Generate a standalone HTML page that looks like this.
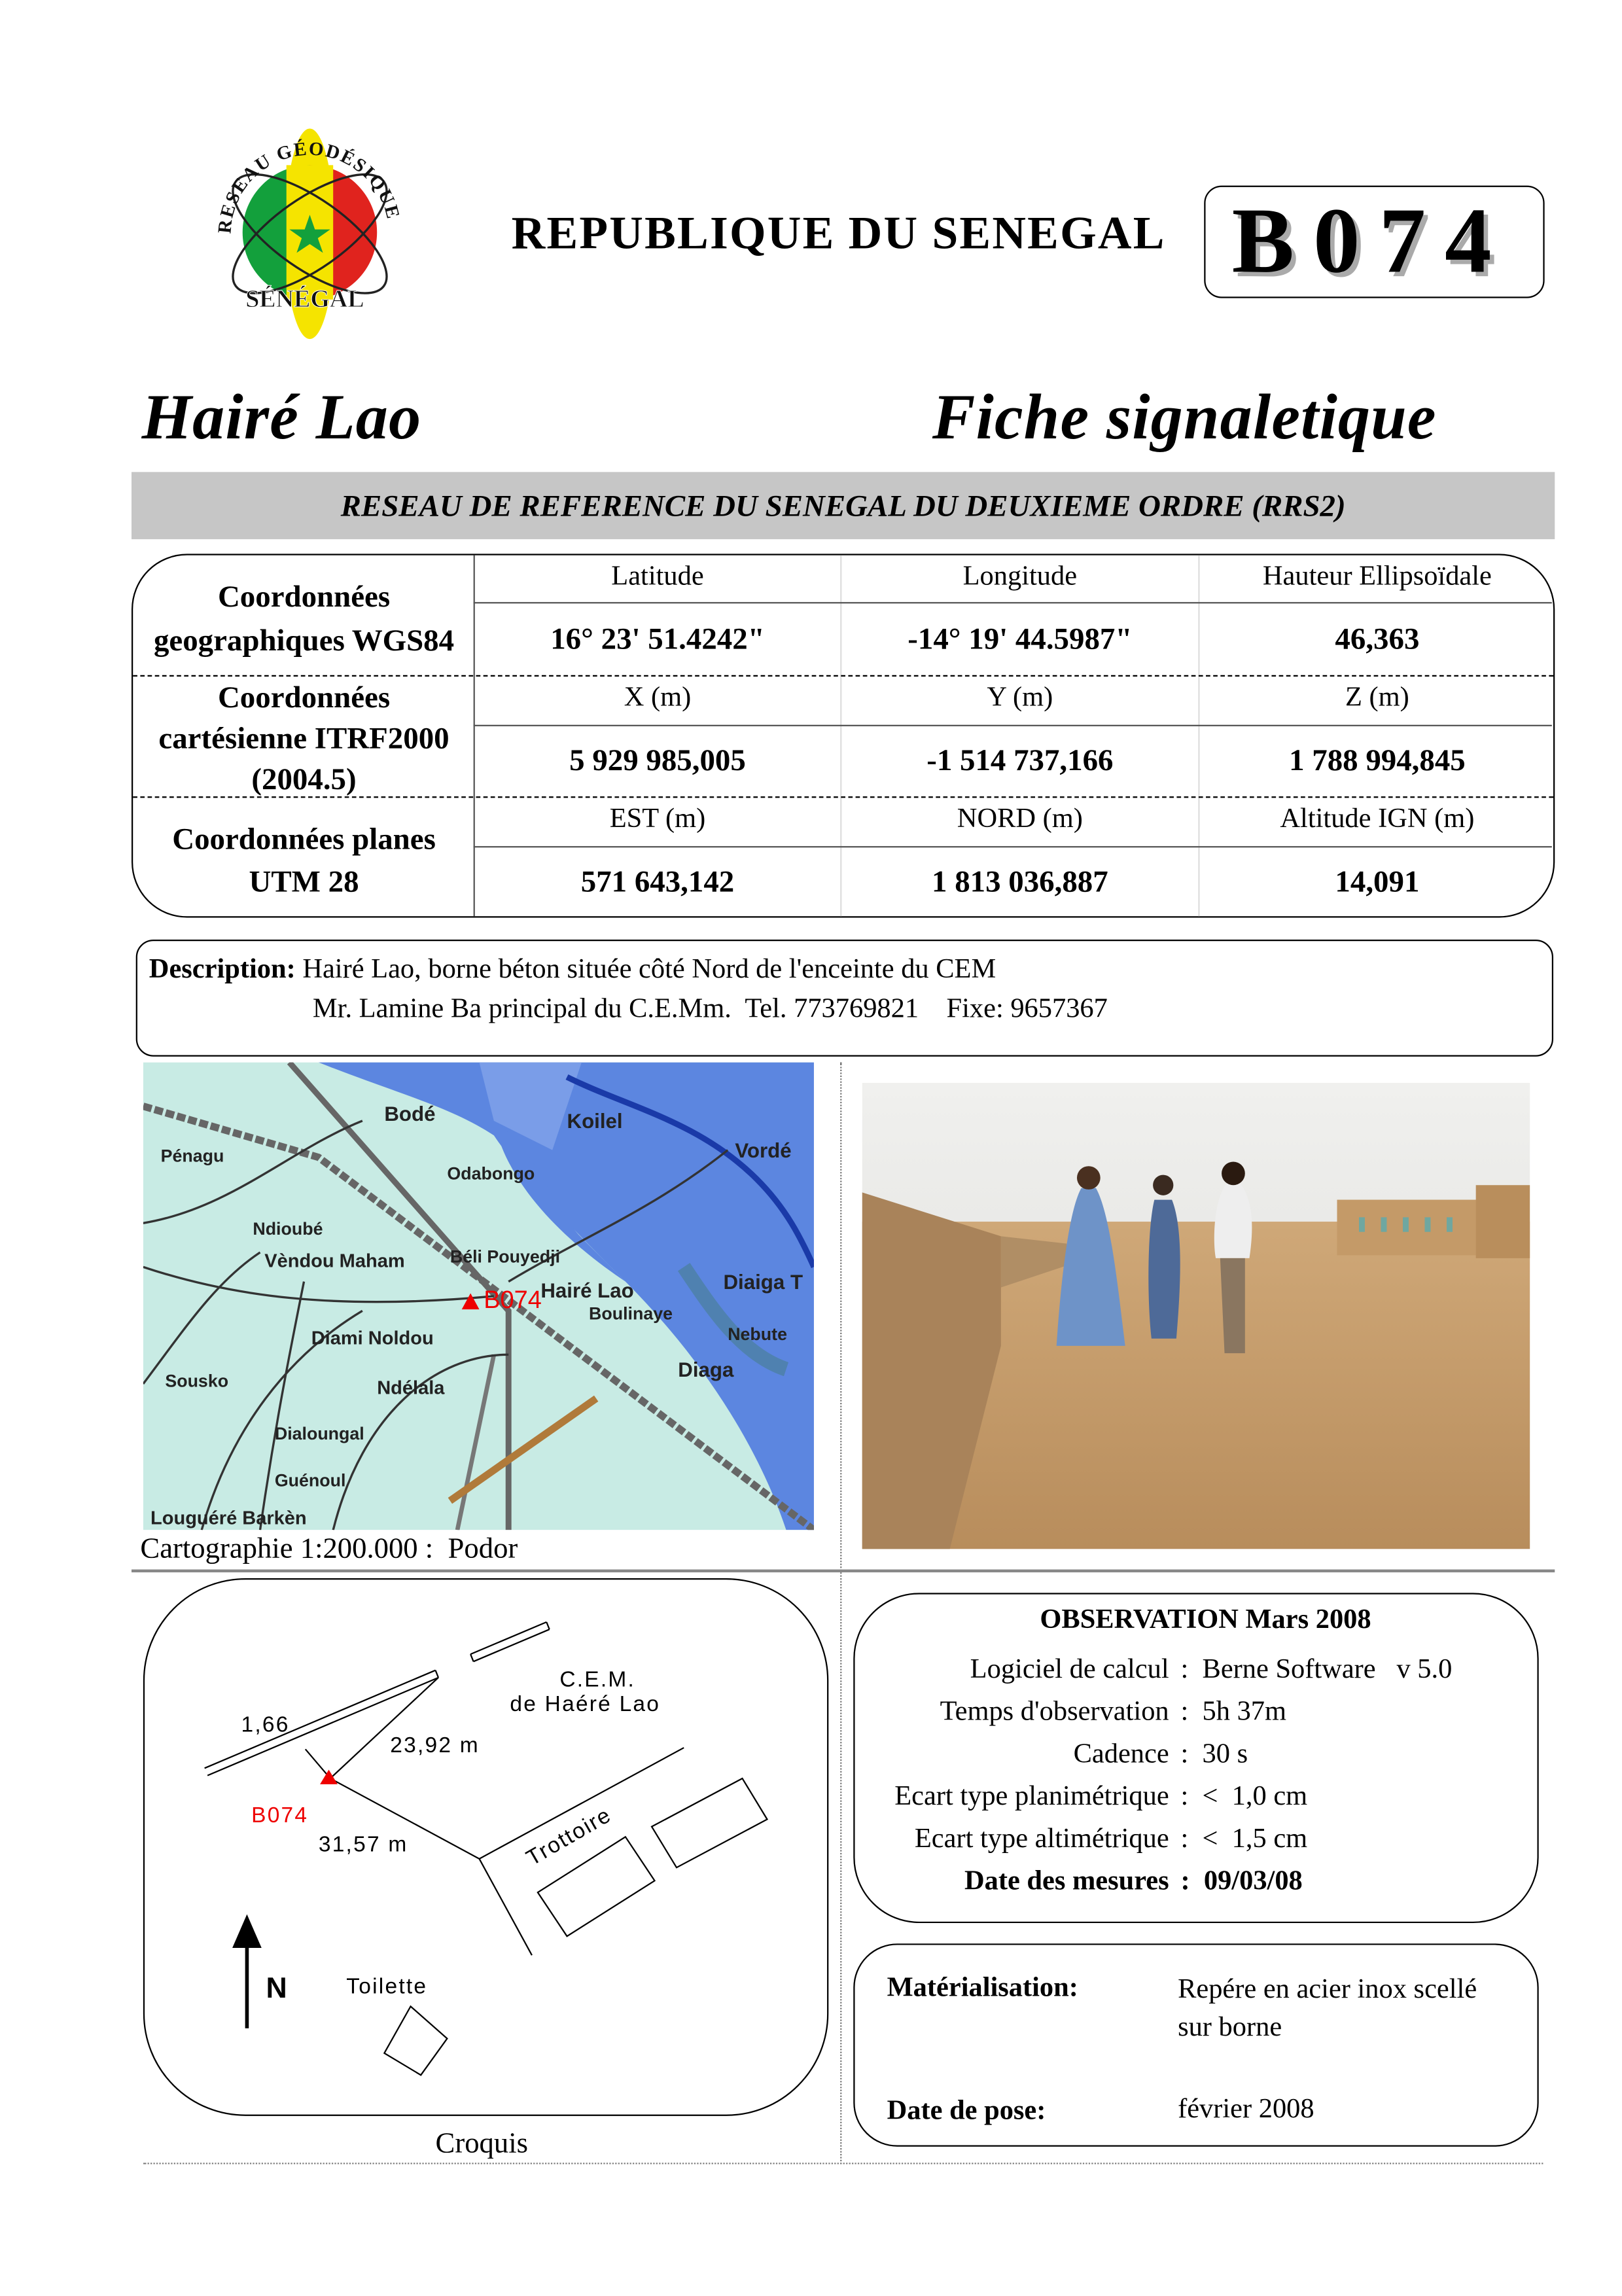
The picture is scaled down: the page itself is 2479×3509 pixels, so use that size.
<!DOCTYPE html>
<html><head><meta charset="utf-8">
<style>
html,body{margin:0;padding:0;background:#fff;}
body{width:2479px;height:3508px;overflow:hidden;position:relative;}
#p{position:absolute;left:0;top:0;width:1110px;height:1571px;transform:scale(2.23333);transform-origin:0 0;font-family:"Liberation Serif",serif;color:#000;}
.a{position:absolute;}
.c{text-align:center;}
</style></head><body><div id="p">

<!-- logo -->
<svg class="a" style="left:140px;top:86px" width="145" height="150" viewBox="0 0 145 150">
<defs><path id="arcT" d="M18,74 A54,54 0 0 1 126,74"/><path id="arcB" d="M30,112 Q72,135 114,112"/></defs>
<ellipse cx="72" cy="74" rx="17" ry="72" fill="#f5e400"/>
<path d="M72,27 A46,46 0 0 0 72,119 Z" fill="#13a03c"/>
<path d="M72,27 A46,46 0 0 1 72,119 Z" fill="#e0231e"/>
<rect x="56" y="27" width="32" height="92" fill="#f5e400"/>
<polygon points="72,61 75.5,71 86,71 77.5,77 81,87 72,81 63,87 66.5,77 58,71 68.5,71" fill="#13a03c"/>
<ellipse cx="72" cy="74" rx="62" ry="24" fill="none" stroke="#222" stroke-width="1.5" transform="rotate(35 72 74)"/>
<ellipse cx="72" cy="74" rx="62" ry="24" fill="none" stroke="#222" stroke-width="1.5" transform="rotate(-35 72 74)"/>
<text font-size="13" font-weight="bold" fill="#111" letter-spacing="1"><textPath href="#arcT">RESEAU GÉODÉSIQUE</textPath></text>
<text x="28" y="124" font-size="17" font-weight="bold" fill="#111" stroke="#fff" stroke-width=".4">SÉNÉGAL</text>
</svg>

<div class="a" style="left:350px;top:141px;font-size:32px;font-weight:bold;white-space:nowrap;letter-spacing:1px">REPUBLIQUE DU SENEGAL</div>
<div class="a" style="left:824px;top:127px;width:233px;height:77px;border:1.5px solid #000;border-radius:12px;box-sizing:border-box"></div>
<div class="a" style="left:843px;top:128px;font-size:64px;font-weight:bold;letter-spacing:13px;text-shadow:3px 3px 0 #aaa;white-space:nowrap">B074</div>

<div class="a" style="left:97px;top:260px;font-size:44px;font-weight:bold;font-style:italic;white-space:nowrap;letter-spacing:.5px">Hairé Lao</div>
<div class="a" style="left:638px;top:260px;font-size:44px;font-weight:bold;font-style:italic;white-space:nowrap;letter-spacing:.5px">Fiche signaletique</div>

<div class="a c" style="left:90px;top:323px;width:974px;height:46px;background:#c6c6c6;font-size:21px;font-weight:bold;font-style:italic;line-height:46px">RESEAU DE REFERENCE DU SENEGAL DU DEUXIEME ORDRE (RRS2)</div>

<!-- coordinate table -->
<div class="a" style="left:90px;top:379px;width:974px;height:249px;border:1.5px solid #000;border-radius:38px;box-sizing:border-box"></div>
<div class="a" style="left:324px;top:380px;width:1px;height:247px;background:#555"></div>
<div class="a" style="left:575px;top:380px;width:1px;height:247px;background:#ddd"></div>
<div class="a" style="left:820px;top:380px;width:1px;height:247px;background:#ddd"></div>
<div class="a" style="left:324px;top:412px;width:738px;height:1px;background:#555"></div>
<div class="a" style="left:324px;top:496px;width:738px;height:1px;background:#555"></div>
<div class="a" style="left:324px;top:579px;width:738px;height:1px;background:#555"></div>
<div class="a" style="left:91px;top:462px;width:972px;border-top:1.5px dashed #000"></div>
<div class="a" style="left:91px;top:545px;width:972px;border-top:1.5px dashed #000"></div>

<div class="a c" style="left:92px;top:393px;width:232px;font-size:21px;font-weight:bold;line-height:30px">Coordonnées<br>geographiques WGS84</div>
<div class="a c" style="left:92px;top:463px;width:232px;font-size:21px;font-weight:bold;line-height:28px">Coordonnées<br>cartésienne ITRF2000<br>(2004.5)</div>
<div class="a c" style="left:92px;top:560px;width:232px;font-size:21px;font-weight:bold;line-height:29px">Coordonnées planes<br>UTM 28</div>

<div class="a c" style="left:325px;top:384px;width:250px;font-size:19px">Latitude</div>
<div class="a c" style="left:576px;top:384px;width:244px;font-size:19px">Longitude</div>
<div class="a c" style="left:821px;top:384px;width:243px;font-size:19px">Hauteur Ellipsoïdale</div>
<div class="a c" style="left:325px;top:425px;width:250px;font-size:21px;font-weight:bold">16° 23' 51.4242"</div>
<div class="a c" style="left:576px;top:425px;width:244px;font-size:21px;font-weight:bold">-14° 19' 44.5987"</div>
<div class="a c" style="left:821px;top:425px;width:243px;font-size:21px;font-weight:bold">46,363</div>

<div class="a c" style="left:325px;top:467px;width:250px;font-size:19px">X (m)</div>
<div class="a c" style="left:576px;top:467px;width:244px;font-size:19px">Y (m)</div>
<div class="a c" style="left:821px;top:467px;width:243px;font-size:19px">Z (m)</div>
<div class="a c" style="left:325px;top:508px;width:250px;font-size:21px;font-weight:bold">5 929 985,005</div>
<div class="a c" style="left:576px;top:508px;width:244px;font-size:21px;font-weight:bold">-1 514 737,166</div>
<div class="a c" style="left:821px;top:508px;width:243px;font-size:21px;font-weight:bold">1 788 994,845</div>

<div class="a c" style="left:325px;top:550px;width:250px;font-size:19px">EST (m)</div>
<div class="a c" style="left:576px;top:550px;width:244px;font-size:19px">NORD (m)</div>
<div class="a c" style="left:821px;top:550px;width:243px;font-size:19px">Altitude IGN (m)</div>
<div class="a c" style="left:325px;top:591px;width:250px;font-size:21px;font-weight:bold">571 643,142</div>
<div class="a c" style="left:576px;top:591px;width:244px;font-size:21px;font-weight:bold">1 813 036,887</div>
<div class="a c" style="left:821px;top:591px;width:243px;font-size:21px;font-weight:bold">14,091</div>

<!-- description -->
<div class="a" style="left:93px;top:643px;width:970px;height:80px;border:1.5px solid #000;border-radius:12px;box-sizing:border-box"></div>
<div class="a" style="left:102px;top:650px;font-size:19px;line-height:27px;white-space:nowrap"><b>Description:</b> Hairé Lao, borne béton située côté Nord de l'enceinte du CEM<br><span style="padding-left:112px">Mr. Lamine Ba principal du C.E.Mm.&nbsp; Tel. 773769821 &nbsp;&nbsp; Fixe: 9657367</span></div>

<!-- map -->
<svg class="a" style="left:98px;top:727px" width="459" height="320" viewBox="0 0 459 320">
<rect width="459" height="320" fill="#c8ebe4"/>
<path d="M120,0 L459,0 L459,320 L440,320 C420,260 380,200 330,150 C300,120 260,80 240,50 C210,30 170,20 120,0Z" fill="#5c86e0"/>
<path d="M230,0 L300,0 L280,60 L240,40Z" fill="#7a9de8"/>
<path d="M240,40 C270,60 280,100 300,120 L330,150 C300,130 250,90 240,40Z" fill="#5c86e0"/>
<path d="M370,140 C390,170 410,200 440,210" stroke="#3d7a6a" stroke-width="10" fill="none" opacity=".4"/>
<path d="M290,10 C330,30 380,40 420,80 C440,100 450,120 459,140" stroke="#1a3aa8" stroke-width="4" fill="none"/>
<path d="M0,30 L120,65 L459,320" stroke="#666" stroke-width="5" fill="none" stroke-dasharray="6 2"/>
<path d="M100,0 L250,170 L250,320" stroke="#666" stroke-width="4" fill="none"/>
<path d="M215,320 L240,200" stroke="#777" stroke-width="3" fill="none"/>
<path d="M0,110 C60,100 100,60 150,40 M0,140 C60,160 130,170 240,160 M40,320 C60,250 100,200 150,170 M80,320 C90,250 100,200 110,150 M130,320 C150,240 200,200 250,200 M250,150 C300,120 350,100 400,60 M0,220 C30,180 50,150 80,130" stroke="#333" stroke-width="1.5" fill="none"/>
<path d="M210,300 L310,230" stroke="#b07a3a" stroke-width="5" fill="none"/>
<g font-family="Liberation Sans Narrow,Liberation Sans,sans-serif" font-size="14" font-weight="bold" fill="#222">
<text x="165" y="40">Bodé</text><text x="290" y="45">Koilel</text><text x="405" y="65">Vordé</text>
<text x="12" y="68" font-size="12">Pénagu</text><text x="208" y="80" font-size="12">Odabongo</text>
<text x="75" y="118" font-size="12">Ndioubé</text><text x="83" y="140" font-size="13">Vèndou Maham</text>
<text x="210" y="137" font-size="12">Béli Pouyedji</text><text x="272" y="161">Hairé Lao</text>
<text x="305" y="176" font-size="12">Boulinaye</text><text x="397" y="155">Diaiga T</text>
<text x="115" y="193" font-size="13">Diami Noldou</text><text x="15" y="222" font-size="12">Sousko</text>
<text x="160" y="227" font-size="13">Ndélala</text><text x="90" y="258" font-size="12">Dialoungal</text>
<text x="90" y="290" font-size="12">Guénoul</text><text x="5" y="316" font-size="13">Louguéré Barkèn</text>
<text x="366" y="215">Diaga</text><text x="400" y="190" font-size="12">Nebute</text>
</g>
<polygon points="224,158 230,169 218,169" fill="#e00"/>
<text x="233" y="168" font-family="Liberation Sans,sans-serif" font-size="17" fill="#e00">B074</text>
</svg>

<!-- photo -->
<svg class="a" style="left:590px;top:741px" width="457" height="319" viewBox="0 0 457 319">
<defs><linearGradient id="sky" x1="0" y1="0" x2="0" y2="1"><stop offset="0" stop-color="#f0f0ee"/><stop offset="1" stop-color="#dcdcd8"/></linearGradient>
<linearGradient id="gr" x1="0" y1="0" x2="0" y2="1"><stop offset="0" stop-color="#cfa878"/><stop offset="1" stop-color="#b88d5c"/></linearGradient></defs>
<rect width="457" height="319" fill="url(#sky)"/>
<rect y="95" width="457" height="224" fill="url(#gr)"/>
<polygon points="0,75 95,105 95,180 60,319 0,319" fill="#a9835a"/>
<polygon points="95,105 140,110 140,125 95,140" fill="#b08e65"/>
<rect x="325" y="80" width="97" height="38" fill="#c49a68"/><rect x="420" y="70" width="37" height="50" fill="#b98e5c"/>
<g fill="#6fa7a0"><rect x="340" y="92" width="4" height="10"/><rect x="355" y="92" width="4" height="10"/><rect x="370" y="92" width="4" height="10"/><rect x="385" y="92" width="4" height="10"/><rect x="400" y="92" width="4" height="10"/></g>
<path d="M150,72 C140,90 135,150 133,180 L180,180 C175,140 170,90 160,72Z" fill="#6e93c8"/>
<circle cx="155" cy="65" r="8" fill="#4a3020"/>
<path d="M200,80 C195,100 195,150 198,175 L215,175 C218,140 220,100 212,80Z" fill="#4e6a98"/>
<circle cx="206" cy="70" r="7" fill="#3a2a20"/>
<path d="M250,68 C240,80 240,110 242,120 L265,120 C268,100 268,80 258,68Z" fill="#eee"/>
<path d="M245,120 L262,120 L262,185 L248,185Z" fill="#8a7660"/>
<circle cx="254" cy="62" r="8" fill="#2a1a10"/>
</svg>

<div class="a" style="left:575px;top:727px;height:754px;border-left:1px dotted #777"></div>
<div class="a" style="left:96px;top:1049px;font-size:20px;white-space:nowrap">Cartographie 1:200.000 :&nbsp; Podor</div>
<div class="a" style="left:90px;top:1074px;width:974px;height:2px;background:#888"></div>

<!-- croquis -->
<div class="a" style="left:98px;top:1080px;width:469px;height:368px;border:1.5px solid #000;border-radius:70px;box-sizing:border-box"></div>
<svg class="a" style="left:98px;top:1080px" width="469" height="368" viewBox="0 0 469 368" font-family="Liberation Sans,sans-serif">
<g stroke="#000" stroke-width="1" fill="none">
<path d="M42,130 L200,63 M44,135 L202,68 M200,63 L202,68"/>
<path d="M224,52 L276,30 M226,57 L278,35 M224,52 L226,57 M276,30 L278,35"/>
<path d="M111,117 L128,137 M128,137 L202,68"/>
<path d="M128,137 L230,192 L370,116 M230,192 L266,258"/>
<path d="M270,215 L330,177 L350,207 L290,245Z"/>
<path d="M348,170 L410,137 L427,165 L365,198Z"/>
<path d="M165,325 L183,293 L208,315 L190,340Z"/>
</g>
<polygon points="127,131 133,141 121,141" fill="#e00"/>
<line x1="71" y1="252" x2="71" y2="308" stroke="#000" stroke-width="2.5"/>
<polygon points="71,230 81,253 61,253" fill="#000"/>
<g font-size="15" fill="#000" letter-spacing="1">
<text x="285" y="74">C.E.M.</text><text x="251" y="91">de Haéré Lao</text>
<text x="67" y="105">1,66</text><text x="169" y="119">23,92 m</text>
<text x="74" y="167" fill="#e00">B074</text><text x="120" y="187">31,57 m</text>
<text x="139" y="284">Toilette</text>
<text x="0" y="0" transform="translate(266,197) rotate(-30)">Trottoire</text>
<text x="84" y="287" font-size="20" font-weight="bold" letter-spacing="0">N</text>
</g>
</svg>
<div class="a" style="left:298px;top:1456px;font-size:20px">Croquis</div>

<!-- observation -->
<div class="a" style="left:584px;top:1090px;width:469px;height:226px;border:1.5px solid #000;border-radius:45px;box-sizing:border-box"></div>
<div class="a c" style="left:584px;top:1098px;width:482px;font-size:19px;font-weight:bold">OBSERVATION Mars 2008</div>
<div class="a" style="left:584px;top:1128px;width:216px;font-size:19px;line-height:29px;text-align:right">Logiciel de calcul<br>Temps d'observation<br>Cadence<br>Ecart type planimétrique<br>Ecart type altimétrique<br><b>Date des mesures</b></div>
<div class="a" style="left:808px;top:1128px;font-size:19px;line-height:29px;white-space:nowrap">:&nbsp; Berne Software&nbsp;&nbsp; v 5.0<br>:&nbsp; 5h 37m<br>:&nbsp; 30 s<br>:&nbsp; &lt;&nbsp; 1,0 cm<br>:&nbsp; &lt;&nbsp; 1,5 cm<br><b>:&nbsp; 09/03/08</b></div>

<!-- materialisation -->
<div class="a" style="left:584px;top:1330px;width:469px;height:139px;border:1.5px solid #000;border-radius:30px;box-sizing:border-box"></div>
<div class="a" style="left:607px;top:1350px;font-size:19px;font-weight:bold">Matérialisation:</div>
<div class="a" style="left:806px;top:1349px;font-size:19px;line-height:26px">Repére en acier inox scellé<br>sur borne</div>
<div class="a" style="left:607px;top:1434px;font-size:19px;font-weight:bold">Date de pose:</div>
<div class="a" style="left:806px;top:1433px;font-size:19px">février 2008</div>

<div class="a" style="left:98px;top:1480px;width:958px;border-top:1px dotted #777"></div>
</div></body></html>
